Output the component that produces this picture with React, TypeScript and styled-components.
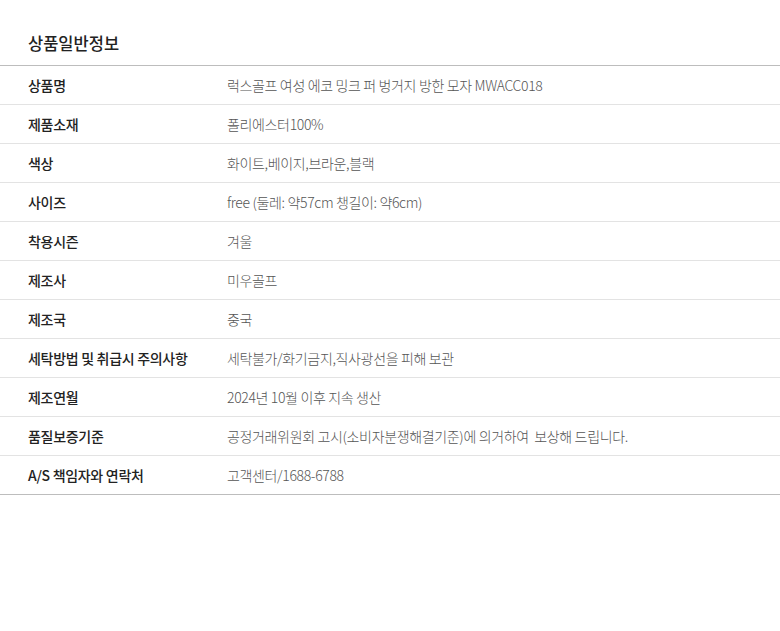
import { createGlobalStyle, styled } from "styled-components";

const GlobalStyle = createGlobalStyle`
  body {
    margin: 0;
    background: #fff;
    font-family: "Noto Sans CJK KR", "Noto Sans", sans-serif;
  }
`;

type TInfo = { label: string; value: string };

const infos: TInfo[] = [
  { label: "상품명", value: "럭스골프 여성 에코 밍크 퍼 벙거지 방한 모자 MWACC018" },
  { label: "제품소재", value: "폴리에스터100%" },
  { label: "색상", value: "화이트,베이지,브라운,블랙" },
  { label: "사이즈", value: "free (둘레: 약57cm 챙길이: 약6cm)" },
  { label: "착용시즌", value: "겨울" },
  { label: "제조사", value: "미우골프" },
  { label: "제조국", value: "중국" },
  { label: "세탁방법 및 취급시 주의사항", value: "세탁불가/화기금지,직사광선을 피해 보관" },
  { label: "제조연월", value: "2024년 10월 이후 지속 생산" },
  { label: "품질보증기준", value: "공정거래위원회 고시(소비자분쟁해결기준)에 의거하여  보상해 드립니다." },
  { label: "A/S 책임자와 연락처", value: "고객센터/1688-6788" },
];

const Section = styled.section`
  width: 780px;
  padding-top: 31px;
`;

const Title = styled.h2`
  margin: 0 0 0 28px;
  height: 34px;
  font-size: 16.5px;
  font-weight: 500;
  color: #222;
  line-height: 24px;
`;

const Table = styled.dl`
  margin: 0;
  border-top: 1px solid #bdbdbd;
  border-bottom: 1px solid #bdbdbd;
`;

const Row = styled.div`
  display: grid;
  grid-template-columns: 199px 1fr;
  height: 38px;
  align-items: center;
  padding-left: 28px;
  & + & {
    border-top: 1px solid #e3e3e3;
  }
`;

const Label = styled.dt`
  font-size: 14px;
  font-weight: 500;
  color: #222;
  letter-spacing: -0.3px;
`;

const Value = styled.dd`
  margin: 0;
  font-size: 14px;
  font-weight: 300;
  color: #555;
  letter-spacing: -0.35px;
  white-space: pre;
`;

export default function App() {
  return (
    <>
      <GlobalStyle />
      <Section>
        <Title>상품일반정보</Title>
        <Table>
          {infos.map((info) => (
            <Row key={info.label}>
              <Label>{info.label}</Label>
              <Value>{info.value}</Value>
            </Row>
          ))}
        </Table>
      </Section>
    </>
  );
}
